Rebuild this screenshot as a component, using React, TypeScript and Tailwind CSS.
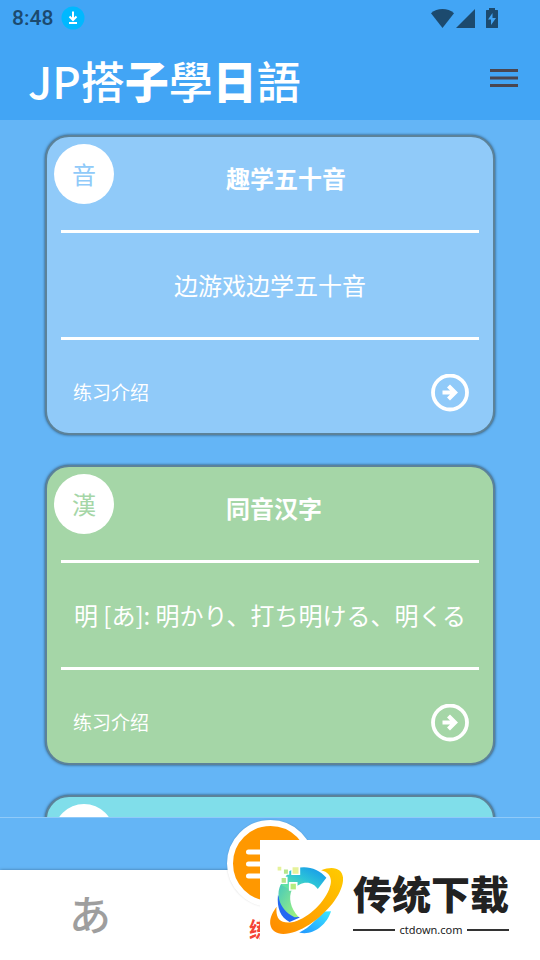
// Home screen: practice card list with bottom navigation

import React from "react";

type Practice = {
  id: string;
  badge?: string;
  title?: string;
  text?: string;
  color: string;
  badgeColor: string;
};

const practices: Practice[] = [
  {
    id: "kana",
    badge: "音",
    title: "趣学五十音",
    text: "边游戏边学五十音",
    color: "bg-[#90caf9]",
    badgeColor: "text-[#90caf9]",
  },
  {
    id: "kanji",
    badge: "漢",
    title: "同音汉字",
    text: "明 [あ]: 明かり、打ち明ける、明くる",
    color: "bg-[#a5d6a7]",
    badgeColor: "text-[#a5d6a7]",
  },
  {
    id: "more",
    color: "bg-[#80deea]",
    badgeColor: "text-[#80deea]",
  },
];

function StatusBar() {
  return (
    <div className="flex h-9 items-center justify-between pl-3 pr-[42px] text-[#1c4a6e]">
      <div className="flex items-center gap-2">
        <span className="font-['Roboto'] text-[21px] font-medium leading-6">8:48</span>
        <svg className="h-6 w-6" viewBox="0 0 24 24">
          <circle cx="12" cy="12" r="11.5" fill="#00b8ff" />
          <path d="M12 5.5v8M8.5 10.5l3.5 3.5 3.5-3.5M8 17h8" stroke="#fff" strokeWidth="2" fill="none" />
        </svg>
      </div>
      <svg className="h-5 w-[67px]" viewBox="0 0 67 20" fill="currentColor">
        <path d="M0 5.2C3.2 2.3 7.2 1 11.5 1S19.8 2.3 23 5.2L11.5 20Z" />
        <path d="M44 1v19H25Z" />
        <path
          fillRule="evenodd"
          d="M58 0h6v2h2.500q.5 0 .5.600V19.400q0 .6-.6.600H55.600q-.6 0-.6-.6V2.600q0-.6.6-.6H58ZM61.500 5l-4.500 6.500h3V17l5-7h-3.500Z"
        />
      </svg>
    </div>
  );
}

function Header() {
  return (
    <header className="h-[120px] shrink-0 bg-[#42a5f5]">
      <StatusBar />
      <div className="flex h-[84px] items-center justify-between pl-7 pr-[22px]">
        <h1 className="whitespace-nowrap pt-1 text-[44px] font-medium leading-[48px] text-white">
          JP搭<span className="font-black">子</span>學<span className="font-black">日</span>語
        </h1>
        <button type="button" aria-label="Menu" className="text-[#4a4650]">
          <svg className="h-7 w-7" viewBox="0 0 28 28" fill="currentColor">
            <path d="M0 5h28v3H0zM0 12.500h28v3H0zM0 20h28v3H0z" />
          </svg>
        </button>
      </div>
    </header>
  );
}

function PracticeCard({ practice }: { practice: Practice }) {
  const { badge, title, text, color, badgeColor } = practice;
  return (
    <article
      className={`relative h-[300px] shrink-0 rounded-3xl border-2 border-[#5c8299] px-[14px] text-white shadow-[0_0_3px_rgba(0,0,0,0.6)] ${color}`}
    >
      <div
        className={`absolute left-[7px] top-[7px] flex h-[60px] w-[60px] items-center justify-center rounded-full bg-white text-2xl ${badgeColor}`}
      >
        {badge}
      </div>
      {title && (
        <>
          <h2 className="flex h-[93px] items-center pb-3 pl-[165px] text-2xl font-bold">{title}</h2>
          <div className="flex h-[110px] items-center justify-center whitespace-nowrap border-y-3 border-white text-2xl">
            {text}
          </div>
          <div className="flex h-[93px] items-center justify-between pl-3 pr-[10px] pt-3">
            <span className="text-[19px]">练习介绍</span>
            <button type="button" aria-label={title}>
              <svg className="h-[38px] w-[38px]" viewBox="0 0 38 38" fill="none" stroke="#fff">
                <circle cx="19" cy="18.5" r="17" strokeWidth="3.8" />
                <path d="M11.500 18.500H23M17.500 12l6.500 6.500-6.500 6.500" strokeWidth="4.200" />
              </svg>
            </button>
          </div>
        </>
      )}
    </article>
  );
}

function BottomNav() {
  return (
    <nav className="relative h-[143px] shrink-0 border-t border-[#90caf9] pt-[52px]">
      <div className="grid h-full grid-cols-3 bg-white shadow-[0_0_3px_rgba(0,0,0,0.35)]">
        <button type="button" className="pb-1 font-['Noto_Sans_CJK_JP'] text-[42px] font-medium leading-none text-[#9e9e9e]">
          あ
        </button>
        <button type="button" className="relative flex flex-col items-center text-[21px] font-bold text-[#f44336]">
          <span className="-mt-[50px] flex h-[87px] w-[87px] shrink-0 items-center justify-center rounded-full border-6 border-white bg-[#ff9800] shadow-[0_0_2px_rgba(0,0,0,0.15)]">
            <svg className="h-12 w-12" viewBox="0 0 48 48" stroke="#fff" strokeWidth="5" strokeLinecap="round">
              <path d="M2.500 12h43M2.500 24h43M2.500 36h43" />
            </svg>
          </span>
          <span className="absolute top-[46px] leading-6">练习</span>
        </button>
      </div>
    </nav>
  );
}

function SiteLogo() {
  return (
    <svg className="h-[69px] w-[73px] shrink-0" viewBox="180 256 220 207">
      <defs>
        <linearGradient id="arc" x1="0" y1="1" x2="1" y2="0">
          <stop offset="0" stopColor="#7cf08c" />
          <stop offset="0.5" stopColor="#2cc4d8" />
          <stop offset="1" stopColor="#128fef" />
        </linearGradient>
        <linearGradient id="leaf" x1="0" y1="0" x2="1" y2="1">
          <stop offset="0" stopColor="#45c8bd" />
          <stop offset="1" stopColor="#a5f57a" />
        </linearGradient>
        <linearGradient id="tail" x1="0" y1="1" x2="1" y2="0">
          <stop offset="0" stopColor="#2196ff" />
          <stop offset="1" stopColor="#3ce8ff" />
        </linearGradient>
        <linearGradient id="ring" x1="0" y1="1" x2="1" y2="0">
          <stop offset="0" stopColor="#ff8a00" />
          <stop offset="1" stopColor="#ffcc00" />
        </linearGradient>
      </defs>
      <path fill="#2468f2" d="M204 342C200 382 212 411 239 424L270 411C237 397 218 373 204 342Z" />
      <path fill="url(#leaf)" d="M214 308C198 335 202 383 254 410L266 409C241 382 235 350 246 327Z" />
      <path fill="url(#arc)" d="M236 272C274 249 322 257 350 291L324 325C308 300 274 297 246 330L214 312Z" />
      <path fill="url(#tail)" d="M364 392C350 435 309 466 268 456C304 440 318 414 345 393Z" />
      <path
        fill="url(#ring)"
        d="M334 268C375 252 403 265 400 300C396 343 352 397 299 432C247 466 188 473 181 432C178 413 188 394 200 378C196 413 210 430 246 425C288 417 340 371 358 326C370 296 363 275 334 268Z"
      />
      <path fill="#fff" d="M244 254h27v29h-27zM218 262h20v20h-20zM211 288h22v22h-22zM237 304h26v26h-26z" />
      <path fill="#e6f29a" d="M248 259h18v20h-18zM203 258h11v11h-11z" />
      <path fill="#b5e68c" d="M222 266h12v13h-12zM215 292h13v14h-13z" />
      <path fill="#b4ec80" d="M242 309h16v17h-16z" />
    </svg>
  );
}

function SiteBanner() {
  return (
    <a href="#ctdown" className="absolute bottom-0 right-0 flex h-[120px] w-[280px] items-center gap-[10px] bg-white pl-[10px] text-[#222]">
      <SiteLogo />
      <div className="w-[156px]">
        <div className="whitespace-nowrap pt-1 text-[39px] font-black leading-[52px]">传统下载</div>
        <div className="mt-1 flex items-center gap-1 font-['Noto_Sans'] text-[11px] leading-4">
          <span className="h-[2px] flex-1 bg-[#333]" />
          ctdown.com
          <span className="h-[2px] flex-1 bg-[#333]" />
        </div>
      </div>
    </a>
  );
}

function App() {
  return (
    <div className="relative flex h-screen flex-col overflow-hidden bg-[#64b5f6] font-['Noto_Sans_CJK_SC',sans-serif]">
      <Header />
      <main className="flex min-h-0 flex-1 flex-col gap-[30px] overflow-hidden px-[45px] pt-[15px]">
        {practices.map((practice) => (
          <PracticeCard key={practice.id} practice={practice} />
        ))}
      </main>
      <BottomNav />
      <SiteBanner />
    </div>
  );
}

export default App;
